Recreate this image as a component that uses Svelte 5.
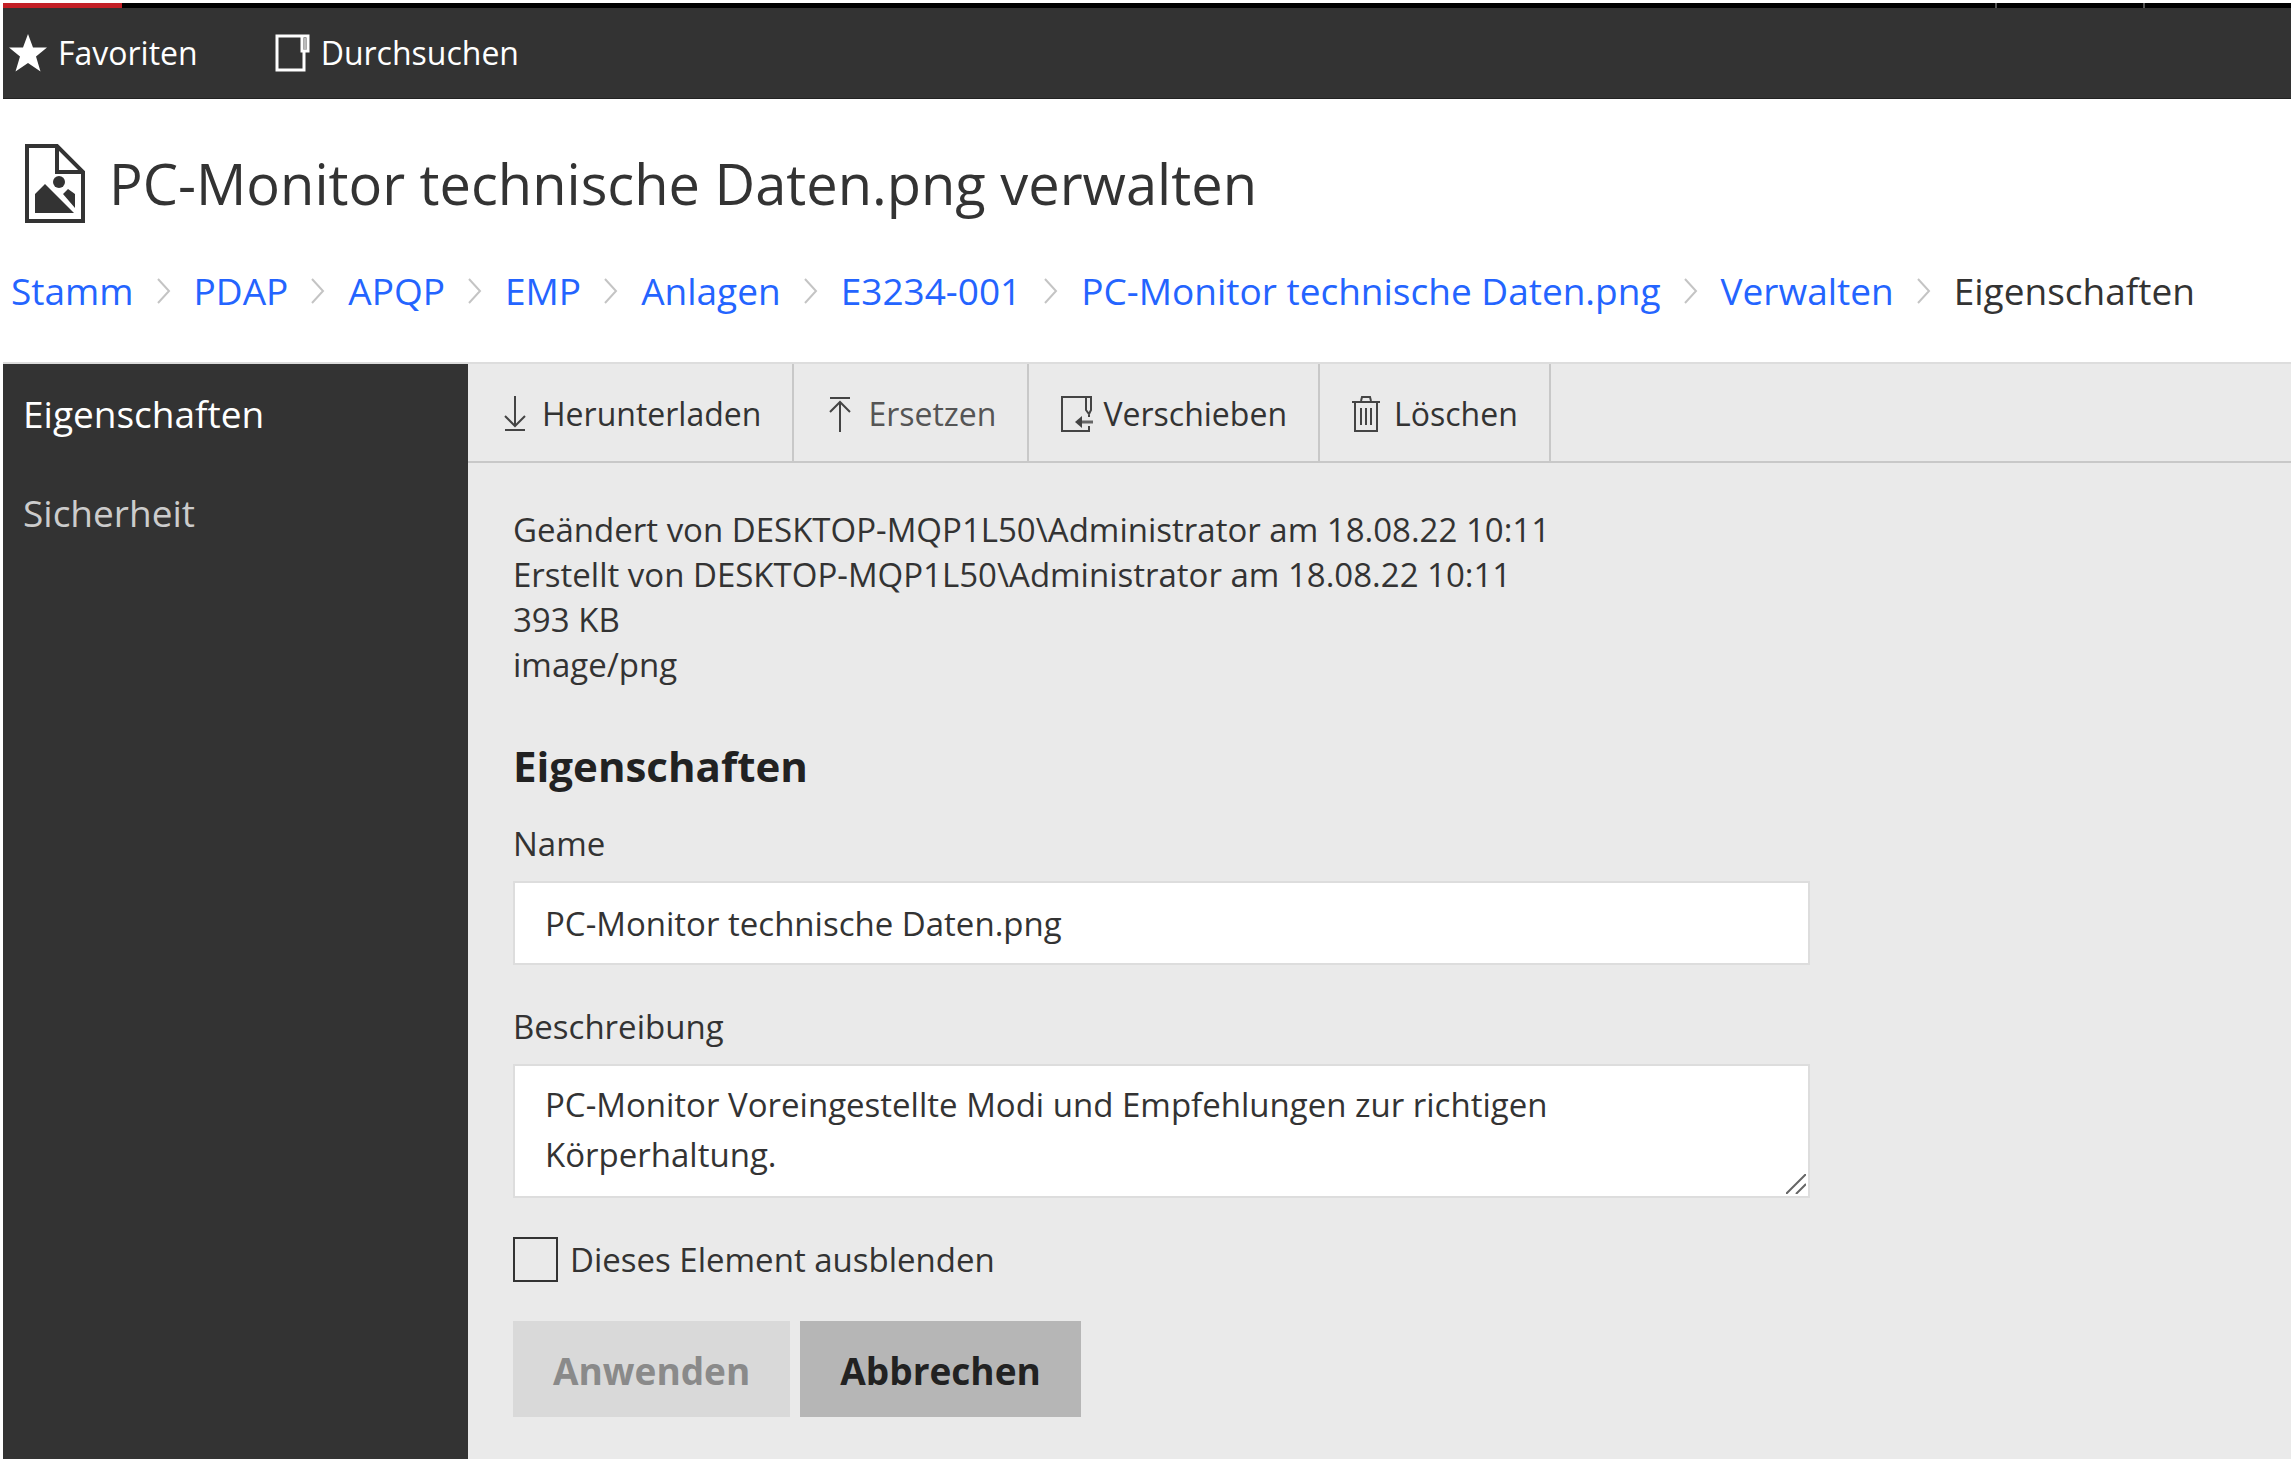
<script lang="ts">
	type Crumb = { label: string; href?: string };

	const crumbs: Crumb[] = [
		{ label: "Stamm", href: "#stamm" },
		{ label: "PDAP", href: "#pdap" },
		{ label: "APQP", href: "#apqp" },
		{ label: "EMP", href: "#emp" },
		{ label: "Anlagen", href: "#anlagen" },
		{ label: "E3234-001", href: "#e3234-001" },
		{ label: "PC-Monitor technische Daten.png", href: "#datei" },
		{ label: "Verwalten", href: "#verwalten" },
		{ label: "Eigenschaften" },
	];

	let name = $state("PC-Monitor technische Daten.png");
	let description = $state(
		"PC-Monitor Voreingestellte Modi und Empfehlungen zur richtigen Körperhaltung."
	);
	let hidden = $state(false);
</script>

<div class="page">
	<div class="strip">
		<span class="active"></span>
		<span class="rest"></span>
		<span class="cell"></span>
		<span class="cell"></span>
	</div>

	<nav class="topbar">
		<a href="#favoriten">
			<svg width="38" height="38" viewBox="0 0 38 38" fill="#fff">
				<path d="M19 0l5 13.500h14l-11 9 4.500 15L19 29 6.500 37.500l4.500-15-11-9h14z" />
			</svg>
			Favoriten
		</a>
		<a href="#durchsuchen">
			<svg width="36" height="38" viewBox="0 0 36 38" fill="none" stroke="#fff" stroke-width="3">
				<path d="M30 18v18H3V2h31v15h-6V3" />
				<path d="M31 4v12" stroke="#bbb" />
			</svg>
			Durchsuchen
		</a>
	</nav>

	<header>
		<h1>
			<svg width="60" height="79" viewBox="0 0 60 79">
				<path d="M2 2h30l26 26v49H2z M32 2v26h26" fill="none" stroke="#333" stroke-width="4" />
				<circle cx="34" cy="38" r="6" fill="#333" />
				<path d="M10 69V50l10-10 29 29z M38 50l5-5 7 5v14z" fill="#333" />
			</svg>
			PC-Monitor technische Daten.png verwalten
		</h1>
		<nav class="crumbs">
			{#each crumbs as crumb, i}
				{#if i > 0}
					<svg width="14" height="26" viewBox="0 0 14 26" fill="none" stroke="#c4c4c4" stroke-width="2">
						<path d="M1 1l11 12L1 25" />
					</svg>
				{/if}
				{#if crumb.href}
					<a href={crumb.href}>{crumb.label}</a>
				{:else}
					<span>{crumb.label}</span>
				{/if}
			{/each}
		</nav>
	</header>

	<div class="body">
		<nav class="sidebar">
			<a class="current" href="#eigenschaften">Eigenschaften</a>
			<a href="#sicherheit">Sicherheit</a>
		</nav>

		<main>
			<div class="toolbar">
				<button type="button">
					<svg viewBox="0 0 30 36">
						<path d="M15 0v29M5 20l10 10 10-10M5 34h20" />
					</svg>
					Herunterladen
				</button>
				<button type="button" class="muted">
					<svg viewBox="0 0 30 36">
						<path d="M14 36V6M4 16L14 6l10 10M4 2h20" />
					</svg>
					Ersetzen
				</button>
				<button type="button">
					<!-- wider than its box, the page corner hangs over into the gap -->
					<svg viewBox="0 0 30 36">
						<path d="M28 19v2M28 30v5H1V1h29v13l-2 4-3-4V2" />
						<path d="M32 26H18" stroke-width="3" stroke="#666" />
						<path d="M21 20l-7 6 7 6z" fill="#444" stroke="none" />
					</svg>
					Verschieben
				</button>
				<button type="button">
					<svg viewBox="0 0 30 36">
						<path d="M0 6h28M9 5l1-4h8l1 4M3 7v28h22V7M9 12v17M14 12v17M19 12v17" />
					</svg>
					Löschen
				</button>
			</div>

			<form onsubmit={(e) => e.preventDefault()}>
				<p class="meta">
					Geändert von DESKTOP-MQP1L50\Administrator am 18.08.22 10:11<br />
					Erstellt von DESKTOP-MQP1L50\Administrator am 18.08.22 10:11<br />
					393 KB<br />
					image/png
				</p>

				<h2>Eigenschaften</h2>

				<label for="name">Name</label>
				<input id="name" type="text" bind:value={name} />

				<label for="description">Beschreibung</label>
				<div class="area">
					<textarea id="description" rows="2" spellcheck="false" bind:value={description}></textarea>
					<svg class="grip" width="20" height="20" viewBox="0 0 20 20" stroke="#666" stroke-width="2">
						<path d="M0 20L20 0M10 20L20 10" />
					</svg>
				</div>

				<label class="check">
					<input type="checkbox" bind:checked={hidden} />
					Dieses Element ausblenden
				</label>

				<div class="actions">
					<button type="submit" disabled>Anwenden</button>
					<button type="button">Abbrechen</button>
				</div>
			</form>
		</main>
	</div>
</div>

<style>
	:global(body) {
		background: #fff;
	}

	.page {
		box-sizing: border-box;
		min-height: 100vh;
		padding: 3px 0 0 3px;
		display: flex;
		flex-direction: column;
		font-family: "Open Sans", "Noto Sans", sans-serif;
		font-size: 33px;
		line-height: 45px;
		color: #333;
	}

	a {
		text-decoration: none;
	}
	svg {
		flex: none;
	}
	button,
	input,
	textarea {
		box-sizing: border-box;
		font: inherit;
		color: inherit;
		margin: 0;
	}

	/* header strip, only its lower edge is visible */
	.strip {
		display: flex;
		height: 5px;
		background: #000;
	}
	.strip .active {
		width: 119px;
		background: #c32026;
	}
	.strip .rest {
		flex: 1;
	}
	.strip .cell {
		width: 146px;
		border-left: 2px solid #555;
	}

	.topbar {
		display: flex;
		gap: 76px;
		padding: 22px 6px 23px;
		background: #333;
		border-bottom: 1px solid #222;
		font-size: 32px;
	}
	.topbar a {
		display: flex;
		align-items: center;
		gap: 11px;
		color: #fff;
	}

	h1 {
		display: flex;
		align-items: center;
		gap: 24px;
		margin: 0;
		padding: 45px 22px 0;
		font-size: 56px;
		font-weight: 400;
		line-height: 79px;
	}
	.crumbs {
		display: flex;
		align-items: center;
		gap: 23px;
		padding: 42px 8px 45px;
		font-size: 37px;
		line-height: 52px;
		white-space: nowrap;
	}
	.crumbs a {
		color: #2464ff;
	}

	.body {
		display: flex;
		flex: 1;
		border-top: 2px solid #ddd;
	}
	.sidebar {
		flex: none;
		width: 465px;
		background: #333;
		font-size: 37px;
		line-height: 99px;
	}
	.sidebar a {
		display: block;
		padding: 0 20px;
		color: #ccc;
	}
	.sidebar .current {
		color: #fff;
	}

	main {
		flex: 1;
		background: #eaeaea;
	}
	.toolbar {
		display: flex;
		border-bottom: 2px solid #c8c8c8;
		font-size: 32px;
	}
	.toolbar button {
		display: flex;
		align-items: center;
		gap: 12px;
		padding: 27px 31px 25px 32px;
		background: none;
		border: 0;
		border-right: 2px solid #c8c8c8;
	}
	.toolbar svg {
		width: 30px;
		height: 36px;
		overflow: visible;
		fill: none;
		stroke: #444;
		stroke-width: 2px;
	}
	.toolbar .muted {
		color: #555;
	}

	form {
		display: flex;
		flex-direction: column;
		max-width: 1297px;
		padding: 44px 45px;
	}
	.meta {
		margin: 0 0 53px;
	}
	h2 {
		margin: 0 0 29px;
		color: #222;
		font-size: 42px;
		line-height: 52px;
	}
	label {
		margin-bottom: 15px;
	}
	input[type="text"] {
		height: 84px;
		margin-bottom: 39px;
		padding: 0 30px;
		background: #fff;
		border: 2px solid #ddd;
	}
	.area {
		position: relative;
		display: flex;
	}
	textarea {
		flex: 1;
		height: 134px;
		padding: 14px 30px;
		line-height: 50px;
		background: #fff;
		border: 2px solid #ddd;
		overflow: hidden;
		resize: none;
	}
	.grip {
		position: absolute;
		right: 4px;
		bottom: 4px;
	}

	.check {
		display: flex;
		align-items: center;
		gap: 12px;
		margin: 39px 0;
	}
	.check input {
		appearance: none;
		width: 45px;
		height: 45px;
		border: 2px solid #333;
	}
	.check input:checked {
		background: #333;
	}

	.actions {
		display: flex;
		gap: 10px;
	}
	.actions button {
		padding: 24px 40px 20px;
		background: #b6b6b6;
		border: 0;
		color: #222;
		font-size: 37px;
		font-weight: 700;
		line-height: 52px;
	}
	.actions button:disabled {
		background: #d9d9d9;
		color: #8a8a8a;
	}
</style>
